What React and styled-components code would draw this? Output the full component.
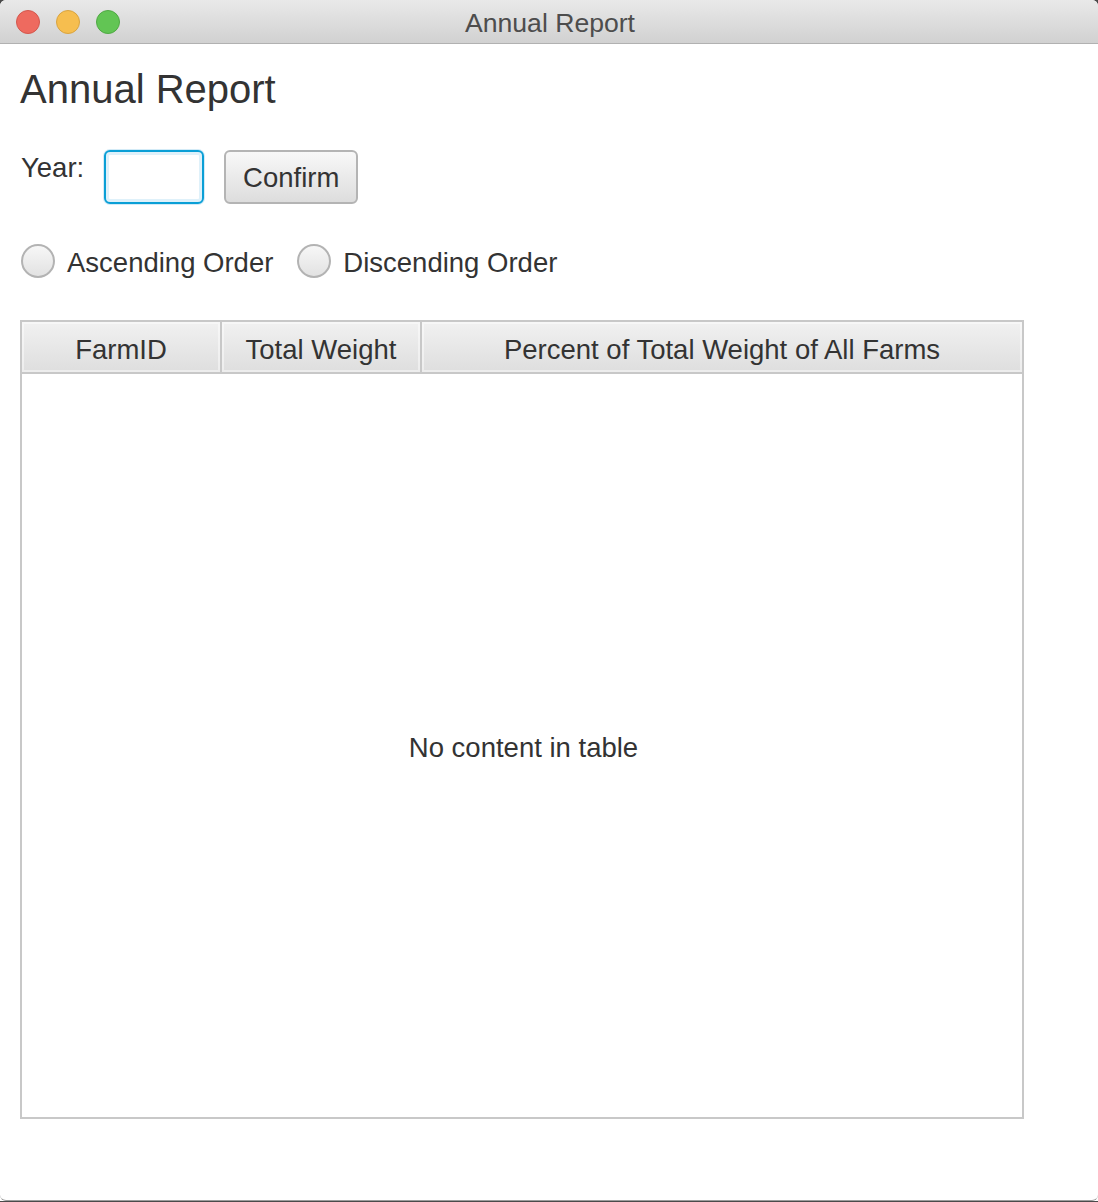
import React from "react";
import styled, { createGlobalStyle } from "styled-components";

const GlobalStyle = createGlobalStyle`
  html, body {
    margin: 0;
    padding: 0;
    background: linear-gradient(#4a4a4a 0, #4a4a4a 10px, #ffffff 10px);
    font-family: "Liberation Sans", Arial, sans-serif;
    color: #333333;
  }
  * { box-sizing: border-box; }
`;

const Window = styled.div`
  width: 1098px;
  height: 1201px;
  background: #ffffff;
  border-radius: 6px;
  border-bottom: 1px solid #9c9c9c;
  overflow: hidden;
  display: flex;
  flex-direction: column;
`;

const TitleBar = styled.div`
  position: relative;
  height: 44px;
  flex: none;
  background: linear-gradient(#e9e9e9, #d1d1d1);
  border-bottom: 1px solid #b1b1b1;
  display: flex;
  align-items: center;
  justify-content: center;
`;

const Lights = styled.div`
  position: absolute;
  left: 16px;
  top: 10px;
  display: flex;
  gap: 16px;
`;

const Light = styled.span`
  width: 24px;
  height: 24px;
  border-radius: 50%;
  background: ${(p) => p.$fill};
  border: 1px solid ${(p) => p.$edge};
`;

const WindowTitle = styled.div`
  font-size: 26.6px;
  color: #4d4d4d;
  line-height: 30px;
  margin-top: 3px;
  margin-left: 2px;
`;

const Content = styled.div`
  flex: 1;
  padding: 22px 20px 0 20px;
  display: flex;
  flex-direction: column;
`;

const Heading = styled.h1`
  margin: 0;
  font-size: 40px;
  font-weight: normal;
  line-height: 46px;
  color: #333333;
`;

const YearRow = styled.div`
  margin-top: 38px;
  display: flex;
  align-items: flex-start;
  gap: 18px;
  height: 54px;
`;

const Label = styled.span`
  font-size: 27.5px;
  line-height: 32px;
  padding-top: 1.5px;
  padding-left: 1px;
`;

const TextField = styled.input`
  width: 100px;
  height: 54px;
  border: 2px solid #0a9fd6;
  border-radius: 6px;
  background: #ffffff;
  box-shadow: 0 0 0 1px #d3ebf7, inset 0 0 0 3px #dff1fa;
  outline: none;
  margin: 0;
  margin-left: 2px;
  font-size: 27.5px;
  font-family: inherit;
`;

const Button = styled.button`
  height: 54px;
  width: 134px;
  margin-left: 2px;
  border: 2px solid #b4b4b4;
  border-radius: 6px;
  background: linear-gradient(#f8f8f8, #dddddd);
  font-family: inherit;
  font-size: 27.5px;
  color: #333333;
  padding: 2px 0 0 0;
  cursor: default;
`;

const RadioRow = styled.div`
  margin-top: 40px;
  display: flex;
  align-items: center;
  gap: 23px;
  height: 34px;
`;

const RadioOption = styled.label`
  display: flex;
  align-items: center;
  gap: 12px;
  padding-left: 1px;
`;

const RadioText = styled.span`
  font-size: 27.5px;
  line-height: 32px;
  padding-top: 4px;
`;

const RadioCircle = styled.span`
  width: 34px;
  height: 34px;
  border-radius: 50%;
  border: 2px solid #b3b3b3;
  background: linear-gradient(#f7f7f7, #e2e2e2);
  flex: none;
`;

const Table = styled.div`
  margin-top: 42px;
  width: 1004px;
  height: 799px;
  border: 2px solid #c8c8c8;
  display: flex;
  flex-direction: column;
`;

const HeaderRow = styled.div`
  display: flex;
  height: 52px;
  border-bottom: 2px solid #c8c8c8;
  flex: none;
`;

const HeaderCell = styled.div`
  width: ${(p) => p.$w};
  flex: ${(p) => (p.$grow ? 1 : "none")};
  height: 50px;
  border-right: ${(p) => (p.$last ? "none" : "2px solid #c8c8c8")};
  background: linear-gradient(#f1f1f1, #dedede);
  box-shadow: inset 0 0 0 2px rgba(255, 255, 255, 0.45);
  display: flex;
  align-items: center;
  justify-content: center;
  font-size: 27.5px;
  color: #333333;
  padding-top: 5px;
`;

const Body = styled.div`
  flex: 1;
  background: #ffffff;
  display: flex;
  align-items: center;
  justify-content: center;
  font-size: 27.5px;
  padding-left: 3px;
  padding-top: 5px;
`;

export default function App() {
  return (
    <>
      <GlobalStyle />
      <Window>
        <TitleBar>
          <Lights>
            <Light $fill="#ee6a5f" $edge="#d4574d" />
            <Light $fill="#f6be4f" $edge="#d9a440" />
            <Light $fill="#62c554" $edge="#50a944" />
          </Lights>
          <WindowTitle>Annual Report</WindowTitle>
        </TitleBar>
        <Content>
          <Heading>Annual Report</Heading>
          <YearRow>
            <Label>Year:</Label>
            <TextField type="text" />
            <Button>Confirm</Button>
          </YearRow>
          <RadioRow>
            <RadioOption>
              <RadioCircle />
              <RadioText>Ascending Order</RadioText>
            </RadioOption>
            <RadioOption>
              <RadioCircle />
              <RadioText>Discending Order</RadioText>
            </RadioOption>
          </RadioRow>
          <Table>
            <HeaderRow>
              <HeaderCell $w="200px">FarmID</HeaderCell>
              <HeaderCell $w="200px">Total Weight</HeaderCell>
              <HeaderCell $grow $last>
                Percent of Total Weight of All Farms
              </HeaderCell>
            </HeaderRow>
            <Body>No content in table</Body>
          </Table>
        </Content>
      </Window>
    </>
  );
}
